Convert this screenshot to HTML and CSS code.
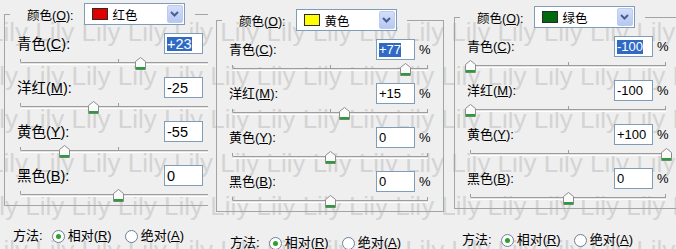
FILE: index.html
```html
<!DOCTYPE html>
<html lang="zh-CN">
<head>
<meta charset="utf-8">
<title>可选颜色</title>
<link rel="stylesheet" href="styles.css">
</head>
<body>
<div class="watermark" aria-hidden="true">
  <div class="wm-row">Lily Lily Lily Lily Lily Lily Lily Lily Lily Lily Lily Lily Lily Lily Lily Lily</div>
  <div class="wm-row wm-shift">Lily Lily Lily Lily Lily Lily Lily Lily Lily Lily Lily Lily Lily Lily Lily Lily</div>
  <div class="wm-row wm-shift">Lily Lily Lily Lily Lily Lily Lily Lily Lily Lily Lily Lily Lily Lily Lily Lily</div>
  <div class="wm-row">Lily Lily Lily Lily Lily Lily Lily Lily Lily Lily Lily Lily Lily Lily Lily Lily</div>
  <div class="wm-row wm-shift">Lily Lily Lily Lily Lily Lily Lily Lily Lily Lily Lily Lily Lily Lily Lily Lily</div>
  <div class="wm-row">Lily Lily Lily Lily Lily Lily Lily Lily Lily Lily Lily Lily Lily Lily Lily Lily</div>
</div>

<main class="strip">
  <!-- Panel 1: 红色 -->
  <section class="panel p1">
    <fieldset class="group">
      <legend class="legend">
        <span class="legend-label">颜色(<u>O</u>):</span>
        <span class="combo">
          <span class="swatch red"></span>
          <span class="combo-text">红色</span>
          <span class="combo-btn"><svg width="9" height="6" viewBox="0 0 9 6"><path d="M1 1l3.5 3.5L8 1" fill="none" stroke="#4a5f90" stroke-width="2"/></svg></span>
        </span>
      </legend>
      <div class="channels">
        <div class="channel">
          <div class="row"><span class="lbl">青色(<u>C</u>):</span><span class="field"><span class="sel">+23</span></span></div>
          <div class="slider"><span class="track"><i class="tick t0"></i><i class="tick t50"></i><i class="tick t100"></i></span><svg class="thumb" style="left:61.5%" width="11" height="13" viewBox="0 0 11 13"><path d="M0.5 12.5V4.5L5.5 0.5L10.5 4.5V12.5Z" fill="#fbfbfb" stroke="#8d8d8d"/><path d="M1 10h9v2.5H1z" fill="#2f9a3c"/></svg></div>
        </div>
        <div class="channel">
          <div class="row"><span class="lbl">洋红(<u>M</u>):</span><span class="field">-25</span></div>
          <div class="slider"><span class="track"><i class="tick t0"></i><i class="tick t50"></i><i class="tick t100"></i></span><svg class="thumb" style="left:37.5%" width="11" height="13" viewBox="0 0 11 13"><path d="M0.5 12.5V4.5L5.5 0.5L10.5 4.5V12.5Z" fill="#fbfbfb" stroke="#8d8d8d"/><path d="M1 10h9v2.5H1z" fill="#2f9a3c"/></svg></div>
        </div>
        <div class="channel">
          <div class="row"><span class="lbl">黄色(<u>Y</u>):</span><span class="field">-55</span></div>
          <div class="slider"><span class="track"><i class="tick t0"></i><i class="tick t50"></i><i class="tick t100"></i></span><svg class="thumb" style="left:22.5%" width="11" height="13" viewBox="0 0 11 13"><path d="M0.5 12.5V4.5L5.5 0.5L10.5 4.5V12.5Z" fill="#fbfbfb" stroke="#8d8d8d"/><path d="M1 10h9v2.5H1z" fill="#2f9a3c"/></svg></div>
        </div>
        <div class="channel">
          <div class="row"><span class="lbl">黑色(<u>B</u>):</span><span class="field">0</span></div>
          <div class="slider"><span class="track"><i class="tick t0"></i><i class="tick t50"></i><i class="tick t100"></i></span><svg class="thumb" style="left:50%" width="11" height="13" viewBox="0 0 11 13"><path d="M0.5 12.5V4.5L5.5 0.5L10.5 4.5V12.5Z" fill="#fbfbfb" stroke="#8d8d8d"/><path d="M1 10h9v2.5H1z" fill="#2f9a3c"/></svg></div>
        </div>
      </div>
    </fieldset>
    <div class="method">
      <span class="method-label">方法:</span>
      <span class="radio on"></span><span class="opt">相对(<u>R</u>)</span>
      <span class="radio"></span><span class="opt">绝对(<u>A</u>)</span>
    </div>
  </section>

  <!-- Panel 2: 黄色 -->
  <section class="panel p2">
    <fieldset class="group">
      <legend class="legend">
        <span class="legend-label">颜色(<u>O</u>):</span>
        <span class="combo">
          <span class="swatch yellow"></span>
          <span class="combo-text">黄色</span>
          <span class="combo-btn"><svg width="9" height="6" viewBox="0 0 9 6"><path d="M1 1l3.5 3.5L8 1" fill="none" stroke="#4a5f90" stroke-width="2"/></svg></span>
        </span>
      </legend>
      <div class="channels">
        <div class="channel">
          <div class="row"><span class="lbl">青色(<u>C</u>):</span><span class="field"><span class="sel">+77</span></span><span class="pct">%</span></div>
          <div class="slider"><span class="track"><i class="tick t0"></i><i class="tick t50"></i><i class="tick t100"></i></span><svg class="thumb" style="left:88.5%" width="11" height="13" viewBox="0 0 11 13"><path d="M0.5 12.5V4.5L5.5 0.5L10.5 4.5V12.5Z" fill="#fbfbfb" stroke="#8d8d8d"/><path d="M1 10h9v2.5H1z" fill="#2f9a3c"/></svg></div>
        </div>
        <div class="channel">
          <div class="row"><span class="lbl">洋红(<u>M</u>):</span><span class="field">+15</span><span class="pct">%</span></div>
          <div class="slider"><span class="track"><i class="tick t0"></i><i class="tick t50"></i><i class="tick t100"></i></span><svg class="thumb" style="left:57.5%" width="11" height="13" viewBox="0 0 11 13"><path d="M0.5 12.5V4.5L5.5 0.5L10.5 4.5V12.5Z" fill="#fbfbfb" stroke="#8d8d8d"/><path d="M1 10h9v2.5H1z" fill="#2f9a3c"/></svg></div>
        </div>
        <div class="channel">
          <div class="row"><span class="lbl">黄色(<u>Y</u>):</span><span class="field">0</span><span class="pct">%</span></div>
          <div class="slider"><span class="track"><i class="tick t0"></i><i class="tick t50"></i><i class="tick t100"></i></span><svg class="thumb" style="left:50%" width="11" height="13" viewBox="0 0 11 13"><path d="M0.5 12.5V4.5L5.5 0.5L10.5 4.5V12.5Z" fill="#fbfbfb" stroke="#8d8d8d"/><path d="M1 10h9v2.5H1z" fill="#2f9a3c"/></svg></div>
        </div>
        <div class="channel">
          <div class="row"><span class="lbl">黑色(<u>B</u>):</span><span class="field">0</span><span class="pct">%</span></div>
          <div class="slider"><span class="track"><i class="tick t0"></i><i class="tick t50"></i><i class="tick t100"></i></span><svg class="thumb" style="left:50%" width="11" height="13" viewBox="0 0 11 13"><path d="M0.5 12.5V4.5L5.5 0.5L10.5 4.5V12.5Z" fill="#fbfbfb" stroke="#8d8d8d"/><path d="M1 10h9v2.5H1z" fill="#2f9a3c"/></svg></div>
        </div>
      </div>
    </fieldset>
    <div class="method">
      <span class="method-label">方法:</span>
      <span class="radio on"></span><span class="opt">相对(<u>R</u>)</span>
      <span class="radio"></span><span class="opt">绝对(<u>A</u>)</span>
    </div>
  </section>

  <!-- Panel 3: 绿色 -->
  <section class="panel p3">
    <fieldset class="group">
      <legend class="legend">
        <span class="legend-label">颜色(<u>O</u>):</span>
        <span class="combo">
          <span class="swatch green"></span>
          <span class="combo-text">绿色</span>
          <span class="combo-btn"><svg width="9" height="6" viewBox="0 0 9 6"><path d="M1 1l3.5 3.5L8 1" fill="none" stroke="#4a5f90" stroke-width="2"/></svg></span>
        </span>
      </legend>
      <div class="channels">
        <div class="channel">
          <div class="row"><span class="lbl">青色(<u>C</u>):</span><span class="field"><span class="sel">-100</span></span><span class="pct">%</span></div>
          <div class="slider"><span class="track"><i class="tick t0"></i><i class="tick t50"></i><i class="tick t100"></i></span><svg class="thumb" style="left:0%" width="11" height="13" viewBox="0 0 11 13"><path d="M0.5 12.5V4.5L5.5 0.5L10.5 4.5V12.5Z" fill="#fbfbfb" stroke="#8d8d8d"/><path d="M1 10h9v2.5H1z" fill="#2f9a3c"/></svg></div>
        </div>
        <div class="channel">
          <div class="row"><span class="lbl">洋红(<u>M</u>):</span><span class="field">-100</span><span class="pct">%</span></div>
          <div class="slider"><span class="track"><i class="tick t0"></i><i class="tick t50"></i><i class="tick t100"></i></span><svg class="thumb" style="left:0%" width="11" height="13" viewBox="0 0 11 13"><path d="M0.5 12.5V4.5L5.5 0.5L10.5 4.5V12.5Z" fill="#fbfbfb" stroke="#8d8d8d"/><path d="M1 10h9v2.5H1z" fill="#2f9a3c"/></svg></div>
        </div>
        <div class="channel">
          <div class="row"><span class="lbl">黄色(<u>Y</u>):</span><span class="field">+100</span><span class="pct">%</span></div>
          <div class="slider"><span class="track"><i class="tick t0"></i><i class="tick t50"></i><i class="tick t100"></i></span><svg class="thumb" style="left:100%" width="11" height="13" viewBox="0 0 11 13"><path d="M0.5 12.5V4.5L5.5 0.5L10.5 4.5V12.5Z" fill="#fbfbfb" stroke="#8d8d8d"/><path d="M1 10h9v2.5H1z" fill="#2f9a3c"/></svg></div>
        </div>
        <div class="channel">
          <div class="row"><span class="lbl">黑色(<u>B</u>):</span><span class="field">0</span><span class="pct">%</span></div>
          <div class="slider"><span class="track"><i class="tick t0"></i><i class="tick t50"></i><i class="tick t100"></i></span><svg class="thumb" style="left:50%" width="11" height="13" viewBox="0 0 11 13"><path d="M0.5 12.5V4.5L5.5 0.5L10.5 4.5V12.5Z" fill="#fbfbfb" stroke="#8d8d8d"/><path d="M1 10h9v2.5H1z" fill="#2f9a3c"/></svg></div>
        </div>
      </div>
    </fieldset>
    <div class="method">
      <span class="method-label">方法:</span>
      <span class="radio on"></span><span class="opt">相对(<u>R</u>)</span>
      <span class="radio"></span><span class="opt">绝对(<u>A</u>)</span>
    </div>
  </section>
</main>
</body>
</html>
```

FILE: styles.css
```css
* { box-sizing: border-box; }

html, body {
  margin: 0;
  padding: 0;
}

body {
  position: relative;
  width: 676px;
  height: 249px;
  overflow: hidden;
  background: #efefef;
  color: #000;
  font-family: "Liberation Sans", "Noto Sans CJK SC", sans-serif;
}

/* ---- watermark ---- */
.watermark {
  position: absolute;
  left: -11px;
  top: 11px;
  z-index: 0;
  font: 26px/43.6px "Liberation Sans", sans-serif;
  color: #d4d4d4;
  pointer-events: none;
}
.wm-row { white-space: nowrap; height: 43.6px; }
.wm-shift { margin-left: -10px; }

/* ---- layout ---- */
.strip {
  position: relative;
  z-index: 1;
  display: flex;
  height: 249px;
}

.panel {
  flex: none;
  overflow: hidden;
  height: 249px;
}
.p1 { width: 208px; padding: 3px 0 0 4px; }
.p2 { width: 237px; padding: 9px 0 0 8px; }
.p3 { width: 231px; padding: 6px 0 0 9px; }

/* ---- group box ---- */
.group {
  width: 228px;
  min-width: 0;
  margin: 0;
  padding: 8px 0 1px 12px;
  border: 1px solid #a4a4a4;
}

.legend {
  display: flex;
  align-items: center;
  gap: 10px;
  height: 22px;
  margin-left: -7px;
  padding: 0 10px 0 17px;
  font-size: 12.5px;
}

.combo {
  display: flex;
  align-items: center;
  width: 101px;
  height: 22px;
  padding: 0 1px 0 7px;
  background: #fff;
  border: 1px solid #7f9db9;
}
.swatch {
  width: 16px;
  height: 12px;
  margin-right: 5px;
  border: 1px solid #2a2a2a;
}
.red { background: #e00000; }
.yellow { background: #ffff00; }
.green { background: #006a10; }
.combo-text { flex: 1; font-size: 12.5px; }
.combo-btn {
  display: flex;
  align-items: center;
  justify-content: center;
  width: 16px;
  height: 18px;
  background: linear-gradient(#d3def9, #b6c8f2);
  border: 1px solid #bccbef;
  border-radius: 2px;
}

/* ---- channel rows ---- */
.channels {
  display: flex;
  flex-direction: column;
  gap: 5px;
}

.row {
  display: grid;
  grid-template-columns: 147px 39px 16px;
  align-items: center;
  height: 21px;
  font-size: 13px;
  line-height: 16px;
}
.p1 .row { font-size: 14.5px; }

.field {
  display: flex;
  align-items: center;
  height: 21px;
  padding: 0 2px;
  background: #fff;
  border: 1px solid #7f9db9;
}
.sel {
  background: #316ac5;
  color: #fff;
  line-height: 14px;
}
.pct { padding-left: 4px; }

/* ---- slider ---- */
.slider {
  position: relative;
  width: 196px;
  height: 18px;
  margin-left: 3px;
}
.track {
  position: absolute;
  left: 0;
  right: 0;
  top: 8px;
  height: 3px;
  background: #e4e4e4;
  border-top: 1px solid #9c9c9c;
  border-bottom: 1px solid #fff;
  border-radius: 2px 0 0 2px;
}
.tick {
  position: absolute;
  top: -4px;
  width: 1px;
  height: 3px;
  background: #9c9c9c;
}
.t0 { left: 0; }
.t50 { left: 50%; }
.t100 { right: 0; }
.thumb {
  position: absolute;
  top: 3px;
  margin-left: -5.5px;
}

/* ---- method ---- */
.method {
  display: flex;
  align-items: center;
  height: 16px;
  margin-top: 23px;
  font-size: 13px;
  line-height: 16px;
}
.p1 .method { margin-left: 9px; margin-top: 22px; }
.p2 .method { margin-left: 14px; }
.p3 .method { margin-left: 8px; }

.radio {
  display: grid;
  place-items: center;
  width: 13px;
  height: 13px;
  margin: 0 3px 0 9px;
  background: #fff;
  border: 1px solid #6c8098;
  border-radius: 50%;
}
.radio.on::after {
  content: "";
  width: 5px;
  height: 5px;
  border-radius: 50%;
  background: #2aa22a;
}
.opt + .radio { margin-left: 13px; }
```
